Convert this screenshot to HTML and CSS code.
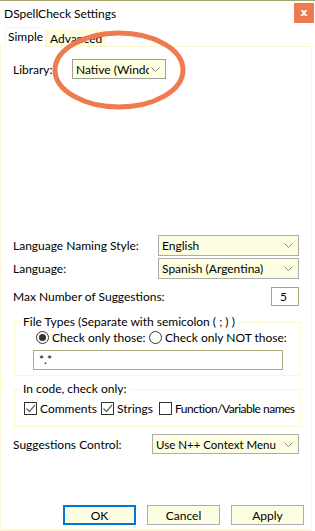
FILE: index.html
```html
<!DOCTYPE html>
<html lang="en">
<head>
  <meta charset="UTF-8">
  <meta name="viewport" content="width=device-width, initial-scale=1.0">
  <title>DSpellCheck Settings</title>
  <link rel="stylesheet" href="styles.css">
</head>
<body>

<div class="window">
  <div class="titlebar">
    <span class="title">DSpellCheck Settings</span>
    <button class="close">x</button>
  </div>

  <div class="tabs">
    <div class="tab active">Simple</div>
    <div class="tab">Advanced</div>
  </div>

  <div class="panel">
    <!-- Library -->
    <div class="row library">
      <span class="label">Library:</span>
      <div class="combo lib-combo">
        <span class="combo-text">Native (Windows)</span>
        <svg class="chev" width="9" height="5" viewBox="0 0 9 5"><path d="M0.5 0.5 L4.5 4.5 L8.5 0.5" fill="none" stroke="#8a8a8a"/></svg>
      </div>
    </div>

    <div class="spacer"></div>

    <div class="row">
      <span class="label">Language Naming Style:</span>
      <div class="combo wide">
        <span class="combo-text">English</span>
        <svg class="chev" width="9" height="5" viewBox="0 0 9 5"><path d="M0.5 0.5 L4.5 4.5 L8.5 0.5" fill="none" stroke="#8a8a8a"/></svg>
      </div>
    </div>
    <div class="row tight">
      <span class="label">Language:</span>
      <div class="combo wide">
        <span class="combo-text">Spanish (Argentina)</span>
        <svg class="chev" width="9" height="5" viewBox="0 0 9 5"><path d="M0.5 0.5 L4.5 4.5 L8.5 0.5" fill="none" stroke="#8a8a8a"/></svg>
      </div>
    </div>
    <div class="row suggestions">
      <span class="label">Max Number of Suggestions:</span>
      <div class="numbox">5</div>
    </div>

    <fieldset class="group files">
      <legend>File Types (Separate with semicolon ( ; ) )</legend>
      <div class="radios">
        <label class="opt first"><span class="radio on"></span>Check only those:</label>
        <label class="opt"><span class="radio"></span>Check only NOT those:</label>
      </div>
      <div class="textbox">*.*</div>
    </fieldset>

    <fieldset class="group code">
      <legend>In code, check only:</legend>
      <div class="checks">
        <label class="opt c1"><span class="check on"><svg width="11" height="11" viewBox="0 0 11 11"><path d="M1.5 5.5 L4.5 8.5 L10 2" fill="none" stroke="#5f6a52" stroke-width="1.2"/></svg></span>Comments</label>
        <label class="opt c2"><span class="check on"><svg width="11" height="11" viewBox="0 0 11 11"><path d="M1.5 5.5 L4.5 8.5 L10 2" fill="none" stroke="#5f6a52" stroke-width="1.2"/></svg></span>Strings</label>
        <label class="opt c3"><span class="check"></span>Function/Variable names</label>
      </div>
    </fieldset>

    <div class="row control">
      <span class="label">Suggestions Control:</span>
      <div class="combo ctl-combo">
        <span class="combo-text">Use N++ Context Menu</span>
        <svg class="chev" width="9" height="5" viewBox="0 0 9 5"><path d="M0.5 0.5 L4.5 4.5 L8.5 0.5" fill="none" stroke="#8a8a8a"/></svg>
      </div>
    </div>

    <div class="footer">
      <button class="btn default">OK</button>
      <button class="btn">Cancel</button>
      <button class="btn">Apply</button>
    </div>
  </div>

  <!-- hand-drawn highlight around the library box -->
  <svg class="mark" width="140" height="86" viewBox="0 0 140 86">
    <ellipse cx="70" cy="43" rx="64" ry="37" fill="none" stroke="#f07a50" stroke-width="5"/>
  </svg>
</div>

</body>
</html>
```

FILE: styles.css
```css
body {
  margin: 0;
  background: #fff;
  font-family: Lato, 'Liberation Sans', sans-serif;
  font-size: 12px;
  color: #000;
}
.window {
  position: relative;
  width: 315px;
  height: 531px;
  box-sizing: border-box;
  border-top: 1px solid #a8a46c;
  background: #fff;
  overflow: hidden;
}
.titlebar {
  display: flex;
  justify-content: space-between;
  align-items: flex-start;
  height: 25px;
  padding-left: 4px;
}
.title {
  font-size: 12px;
  margin-top: 5px;
}
.close {
  width: 20px;
  height: 20px;
  margin-top: 2px;
  margin-right: 1px;
  border: none;
  background: #f07a50;
  color: #fff;
  font-family: 'DejaVu Sans', sans-serif;
  font-weight: bold;
  font-size: 11px;
  padding: 0;
  line-height: 18px;
}
.tabs {
  display: flex;
  align-items: flex-end;
  height: 20px;
  padding-left: 5px;
}
.tab {
  box-sizing: border-box;
  height: 16px;
  padding: 0 3px;
  line-height: 15px;
  border: 1px solid #fbf8cf;
  border-bottom: none;
  background: #fffde4;
  white-space: nowrap;
}
.tab.active {
  height: 20px;
  line-height: 18px;
  padding: 0 2px;
  background: #fff;
  margin-bottom: -1px;
  position: relative;
  z-index: 1;
}
.panel {
  display: flex;
  flex-direction: column;
  height: 485px;
  width: 312px;
  box-sizing: border-box;
  border: 1px solid #fbf8cf;
  border-bottom-width: 2px;
  padding: 0 12px;
}
.row {
  display: flex;
  justify-content: space-between;
  align-items: center;
  white-space: nowrap;
}
.row.library {
  justify-content: flex-start;
  margin-top: 12px;
}
.library .label {
  width: 59px;
}
.spacer {
  flex: 0 0 156px;
}
.row.tight {
  margin-top: 2px;
}
.row.suggestions {
  margin-top: 8px;
}
.combo {
  display: flex;
  justify-content: space-between;
  align-items: center;
  box-sizing: border-box;
  height: 21px;
  border: 1px solid #acacac;
  background: #fdfde2;
  padding: 0 5px 0 3px;
  overflow: hidden;
}
.combo-text {
  white-space: nowrap;
  overflow: hidden;
}
.chev {
  flex: none;
  margin-left: 2px;
}
.lib-combo {
  width: 94px;
  height: 20px;
  background: #ffffe1;
  border-color: #9e9e9e;
}
.lib-combo .combo-text {
  width: 76px;
}
.wide {
  width: 141px;
}
.numbox {
  box-sizing: border-box;
  width: 28px;
  height: 19px;
  border: 1px solid #a9a575;
  padding-left: 8px;
  line-height: 17px;
}
.group {
  margin: 9px 0 0 1px;
  width: 287px;
  box-sizing: border-box;
  border: 1px solid #fbf8cf;
  padding: 0;
  white-space: nowrap;
}
.group legend {
  padding: 0 2px;
  margin-left: 6px;
  line-height: 14px;
}
.radios {
  display: flex;
  padding-left: 21px;
  margin-top: 1px;
}
.opt {
  display: flex;
  align-items: center;
  gap: 3px;
}
.radios .first {
  width: 113px;
}
.radio {
  width: 11px;
  height: 11px;
  border: 1px solid #333;
  border-radius: 50%;
  position: relative;
}
.radio.on::after {
  content: "";
  position: absolute;
  left: 2px;
  top: 2px;
  width: 7px;
  height: 7px;
  border-radius: 50%;
  background: #333;
}
.textbox {
  box-sizing: border-box;
  width: 250px;
  height: 20px;
  margin: 5px 0 5px 18px;
  border: 1px solid #aeaa7c;
  padding-left: 5px;
  line-height: 18px;
}
.group.code {
  margin-top: 6px;
}
.checks {
  display: flex;
  padding: 5px 0 10px 9px;
}
.checks .c1 {
  width: 77px;
}
.checks .c2 {
  width: 58px;
}
.checks .c3 {
  letter-spacing: -0.5px;
}
.check {
  width: 11px;
  height: 11px;
  border: 1px solid #333;
  display: flex;
  align-items: center;
  justify-content: center;
}
.check svg {
  display: block;
}
.row.control {
  margin-top: 7px;
}
.ctl-combo {
  width: 147px;
  height: 20px;
}
.ctl-combo .combo-text {
  font-size: 11.5px;
}
.footer {
  display: flex;
  justify-content: flex-end;
  gap: 11px;
  margin-top: auto;
  margin-bottom: 4px;
  margin-right: -5px;
}
.btn {
  box-sizing: border-box;
  width: 73px;
  height: 20px;
  border: 1px solid #adadad;
  background: #fdfde2;
  font-family: inherit;
  font-size: 12px;
  padding: 0;
  color: #000;
}
.btn.default {
  border: 2px solid #0078d7;
}
.mark {
  position: absolute;
  left: 49px;
  top: 26px;
}
```
